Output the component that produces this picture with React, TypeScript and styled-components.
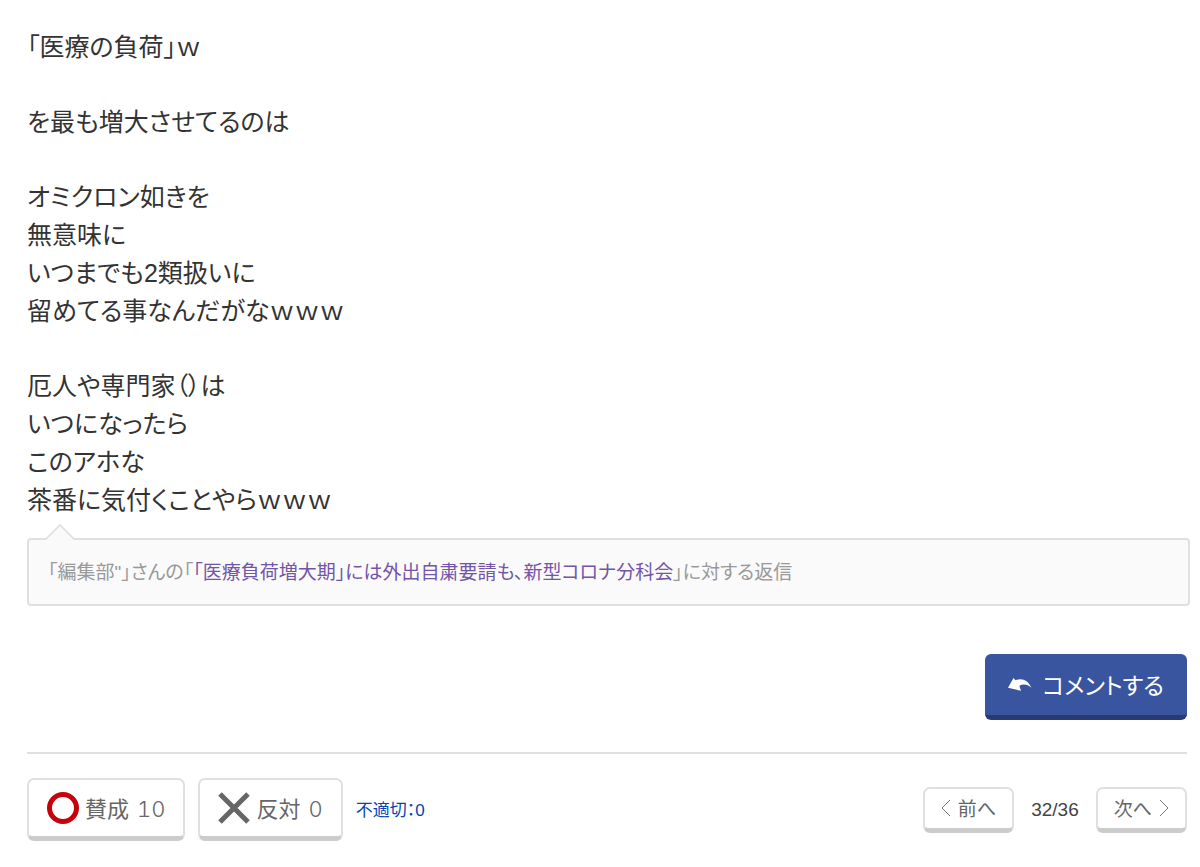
import React from 'react';
import styled, { createGlobalStyle } from 'styled-components';

const Global = createGlobalStyle`
  *, *::before, *::after { box-sizing: border-box; }
  body {
    margin: 0;
    background: #fff;
    color: #333;
    font-family: "Liberation Sans", "Noto Sans CJK JP", sans-serif;
    font-feature-settings: "palt";
  }
  button { font: inherit; font-feature-settings: inherit; cursor: pointer; }
`;

const Page = styled.main`
  padding: 28px 13px 26px 27px;
`;

const Comment = styled.article`
  display: grid;
  gap: 37px;
  font-size: 25px;
  line-height: 38px;
`;

const Paragraph = styled.p`
  margin: 0;
  white-space: pre-line;
`;

const ReplyTo = styled.aside`
  position: relative;
  margin: 19px -3px 0 0;
  padding: 19px 19px 17px;
  border: 2px solid #e0e0e0;
  border-radius: 4px;
  background: #fafafa;
  color: #999;
  font-size: 19px;
  line-height: 28px;
`;

const Pointer = styled.svg`
  position: absolute;
  left: 16px;
  top: -16px;
`;

const TopicLink = styled.a`
  color: #7355a8;
  text-decoration: none;
`;

const Actions = styled.div`
  display: flex;
  justify-content: flex-end;
  margin-top: 48px;
  padding-bottom: 32px;
  border-bottom: 2px solid #e0e0e0;
`;

const CommentButton = styled.button`
  display: flex;
  align-items: center;
  gap: 10px;
  height: 66px;
  padding: 0 23px 2px;
  border: 0;
  border-bottom: 5px solid #263a73;
  border-radius: 6px;
  background: #3a559f;
  color: #fff;
  font-size: 23px;
`;

const Footer = styled.footer`
  display: flex;
  align-items: center;
  justify-content: space-between;
  padding-top: 24px;
`;

const Group = styled.div<{ $gap: number }>`
  display: flex;
  align-items: center;
  gap: ${(p) => p.$gap}px;
`;

const OutlineButton = styled.button<{ $large?: boolean }>`
  display: flex;
  align-items: center;
  gap: ${(p) => (p.$large ? 6 : 7)}px;
  height: ${(p) => (p.$large ? 63 : 46)}px;
  padding: ${(p) => (p.$large ? '0 18px' : '0 16px')};
  border: 2px solid #e0e0e0;
  border-bottom: 5px solid #ccc;
  border-radius: 7px;
  background: #fff;
  color: #666;
  font-size: ${(p) => (p.$large ? 22 : 19)}px;
`;

const Label = styled.span`
  padding-bottom: 2px;
`;

const Count = styled.span`
  margin-left: 8px;
  font-family: Inter, sans-serif;
  font-variant-numeric: tabular-nums;
  font-weight: 300;
`;

const ReportLink = styled.a`
  padding-bottom: 2px;
  color: #0645b1;
  font-size: 17px;
  text-decoration: none;
`;

const PageCount = styled.span`
  font-size: 19px;
  color: #444;
`;

const paragraphs = [
  '「医療の負荷」ｗ',
  'を最も増大させてるのは',
  'オミクロン如きを\n無意味に\nいつまでも2類扱いに\n留めてる事なんだがなｗｗｗ',
  '厄人や専門家（）は\nいつになったら\nこのアホな\n茶番に気付くことやらｗｗｗ',
];

const ReplyIcon = () => (
  <svg width="24" height="18" viewBox="0 0 24 18" aria-hidden="true">
    <path fill="#fff" d="M0 12.800 5.500 3 7.500 5.300C14 2.800 20 5 23.300 12.800 19.500 9.300 15.500 8.800 11.300 10.700L13 15.800Z" />
  </svg>
);

const CircleIcon = () => (
  <svg width="32" height="32" viewBox="0 0 32 32" aria-hidden="true">
    <circle cx="16" cy="16" r="13.500" fill="none" stroke="#c7000b" strokeWidth="5" />
  </svg>
);

const CrossIcon = () => (
  <svg width="32" height="32" viewBox="0 0 32 32" aria-hidden="true">
    <path d="M2 2 30 30M30 2 2 30" stroke="#666" strokeWidth="5" />
  </svg>
);

const Chevron = ({ d }: { d: string }) => (
  <svg width="10" height="18" viewBox="0 0 10 18" aria-hidden="true">
    <path d={d} fill="none" stroke="#777" strokeWidth="1" />
  </svg>
);

export default function App() {
  return (
    <>
      <Global />
      <Page lang="ja">
        <Comment>
          {paragraphs.map((text) => (
            <Paragraph key={text}>{text}</Paragraph>
          ))}
        </Comment>
        <ReplyTo>
          <Pointer width="30" height="17" viewBox="0 0 30 17" aria-hidden="true">
            <path d="M1 16 15 2 29 16V17H1Z" fill="#fafafa" />
            <path d="M1 15 15 1 29 15" fill="none" stroke="#ddd" strokeWidth="1.500" />
          </Pointer>
          「編集部"」さんの「
          <TopicLink href="#topic">「医療負荷増大期」には外出自粛要請も、新型コロナ分科会</TopicLink>
          」に対する返信
        </ReplyTo>
        <Actions>
          <CommentButton type="button">
            <ReplyIcon />
            コメントする
          </CommentButton>
        </Actions>
        <Footer>
          <Group $gap={13}>
            <OutlineButton type="button" $large>
              <CircleIcon />
              <Label>
                賛成<Count>10</Count>
              </Label>
            </OutlineButton>
            <OutlineButton type="button" $large>
              <CrossIcon />
              <Label>
                反対<Count>0</Count>
              </Label>
            </OutlineButton>
            <ReportLink href="#report">不適切：0</ReportLink>
          </Group>
          <Group $gap={17}>
            <OutlineButton type="button">
              <Chevron d="M9 1 1 9 9 17" />
              <Label>前へ</Label>
            </OutlineButton>
            <PageCount>32/36</PageCount>
            <OutlineButton type="button">
              <Label>次へ</Label>
              <Chevron d="M1 1 9 9 1 17" />
            </OutlineButton>
          </Group>
        </Footer>
      </Page>
    </>
  );
}
